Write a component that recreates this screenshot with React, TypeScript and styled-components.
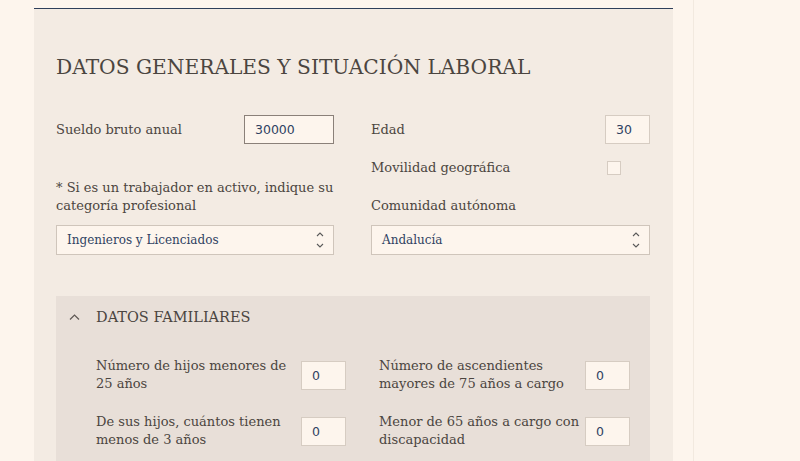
import React from 'react'
import styled, {createGlobalStyle} from 'styled-components'

const GlobalStyle = createGlobalStyle`
  html, body {
    margin: 0;
    padding: 0;
    background: #fdf5ed;
  }
  body {
    font-family: "DejaVu Serif", "Liberation Serif", serif;
    color: #4b4540;
  }
`

const Page = styled.div`
  display: flex;
  height: 461px;
  overflow: hidden;
`

const Main = styled.div`
  width: 693px;
  padding: 8px 20px 0 34px;
  box-sizing: border-box;
  flex-shrink: 0;
`

const Aside = styled.div`
  flex: 1;
  border-left: 1px solid #f2e9df;
`

const Panel = styled.section`
  background: #f3ebe3;
  border-top: 1px solid #2f3f5a;
  padding: 45px 23px 0 22px;
  min-height: 460px;
`

const Title = styled.h1`
  margin: 0 0 35px;
  font-size: 20.2px;
  font-weight: 400;
  line-height: 26px;
  color: #4b4540;
`

const Columns = styled.div`
  display: grid;
  grid-template-columns: 278px 279px;
  column-gap: 37px;
`

const Column = styled.div`
  display: flex;
  flex-direction: column;
`

const FieldRow = styled.div<{$gap?: number}>`
  display: flex;
  align-items: center;
  justify-content: space-between;
  margin-top: ${p => p.$gap ?? 0}px;
`

const Label = styled.label`
  font-size: 13px;
  line-height: 18px;
  color: #4b4540;
`

const StackedLabel = styled(Label)<{$gap?: number}>`
  display: block;
  margin-top: ${p => p.$gap ?? 0}px;
  margin-bottom: 10px;
`

const PushDown = styled.div`
  margin-top: auto;
  display: flex;
  flex-direction: column;
`

const NumberInput = styled.input<{$w: number; $focus?: boolean}>`
  width: ${p => p.$w}px;
  height: 29px;
  box-sizing: border-box;
  border: 1px solid ${p => (p.$focus ? '#8a8079' : '#d6ccc2')};
  background: #fdf5ed;
  padding: 0 10px;
  font-family: "DejaVu Sans", "Liberation Sans", sans-serif;
  font-size: 12.5px;
  color: #2f4262;
  outline: none;
`

const Checkbox = styled.span`
  width: 14px;
  height: 14px;
  box-sizing: border-box;
  border: 1px solid #d6ccc2;
  background: #fdf5ed;
  margin-right: 29px;
`

const SelectBox = styled.div`
  height: 30px;
  box-sizing: border-box;
  border: 1px solid #cfc5bb;
  background: #fdf5ed;
  display: flex;
  align-items: center;
  justify-content: space-between;
  padding: 0 8px 0 10px;
  font-size: 12px;
  color: #2f4262;
`

const Arrows = styled.svg`
  width: 10px;
  height: 20px;
  flex-shrink: 0;
  color: #5a5a5a;
`

const Family = styled.div`
  margin-top: 41px;
  background: #e8dfd8;
  padding: 8px 21px 30px 13px;
`

const FamilyHeader = styled.div`
  display: flex;
  align-items: center;
  gap: 16px;
  height: 26px;
  font-size: 14.5px;
  color: #4b4540;
  margin-bottom: 27px;
`

const Chevron = styled.svg`
  width: 11px;
  height: 8px;
  color: #5f5955;
`

const FamilyGrid = styled.div`
  display: grid;
  grid-template-columns: 250px 251px;
  column-gap: 33px;
  row-gap: 20px;
  padding-left: 27px;
`

const FamilyField = styled.div`
  display: flex;
  align-items: center;
  justify-content: space-between;
  gap: 6px;
`

const FamilyLabel = styled(Label)`
  max-width: 204px;
`

const Select: React.FC<{value: string}> = ({value}) => (
  <SelectBox>
    <span>{value}</span>
    <Arrows viewBox="0 0 10 20">
      <path d="M2 6 L5 3 L8 6" fill="none" stroke="currentColor" strokeWidth="1.1" />
      <path d="M2 14 L5 17 L8 14" fill="none" stroke="currentColor" strokeWidth="1.1" />
    </Arrows>
  </SelectBox>
)

const familyFields = [
  {label: 'Número de hijos menores de 25 años'},
  {label: 'Número de ascendientes mayores de 75 años a cargo'},
  {label: 'De sus hijos, cuántos tienen menos de 3 años'},
  {label: 'Menor de 65 años a cargo con discapacidad'},
]

const App: React.FC = () => {
  return (
    <Page>
      <GlobalStyle />
      <Main>
        <Panel>
          <Title>DATOS GENERALES Y SITUACIÓN LABORAL</Title>
          <Columns>
            <Column>
              <FieldRow>
                <Label>Sueldo bruto anual</Label>
                <NumberInput $w={90} $focus defaultValue="30000" />
              </FieldRow>
              <PushDown>
                <StackedLabel>* Si es un trabajador en activo, indique su categoría profesional</StackedLabel>
                <Select value="Ingenieros y Licenciados" />
              </PushDown>
            </Column>
            <Column>
              <FieldRow>
                <Label>Edad</Label>
                <NumberInput $w={45} defaultValue="30" />
              </FieldRow>
              <FieldRow $gap={15}>
                <Label>Movilidad geográfica</Label>
                <Checkbox />
              </FieldRow>
              <StackedLabel $gap={20}>Comunidad autónoma</StackedLabel>
              <Select value="Andalucía" />
            </Column>
          </Columns>
          <Family>
            <FamilyHeader>
              <Chevron viewBox="0 0 11 8">
                <path d="M1 6.5 L5.5 2 L10 6.5" fill="none" stroke="currentColor" strokeWidth="1.2" />
              </Chevron>
              DATOS FAMILIARES
            </FamilyHeader>
            <FamilyGrid>
              {familyFields.map(f => (
                <FamilyField key={f.label}>
                  <FamilyLabel>{f.label}</FamilyLabel>
                  <NumberInput $w={45} defaultValue="0" />
                </FamilyField>
              ))}
            </FamilyGrid>
          </Family>
        </Panel>
      </Main>
      <Aside />
    </Page>
  )
}

export default App
